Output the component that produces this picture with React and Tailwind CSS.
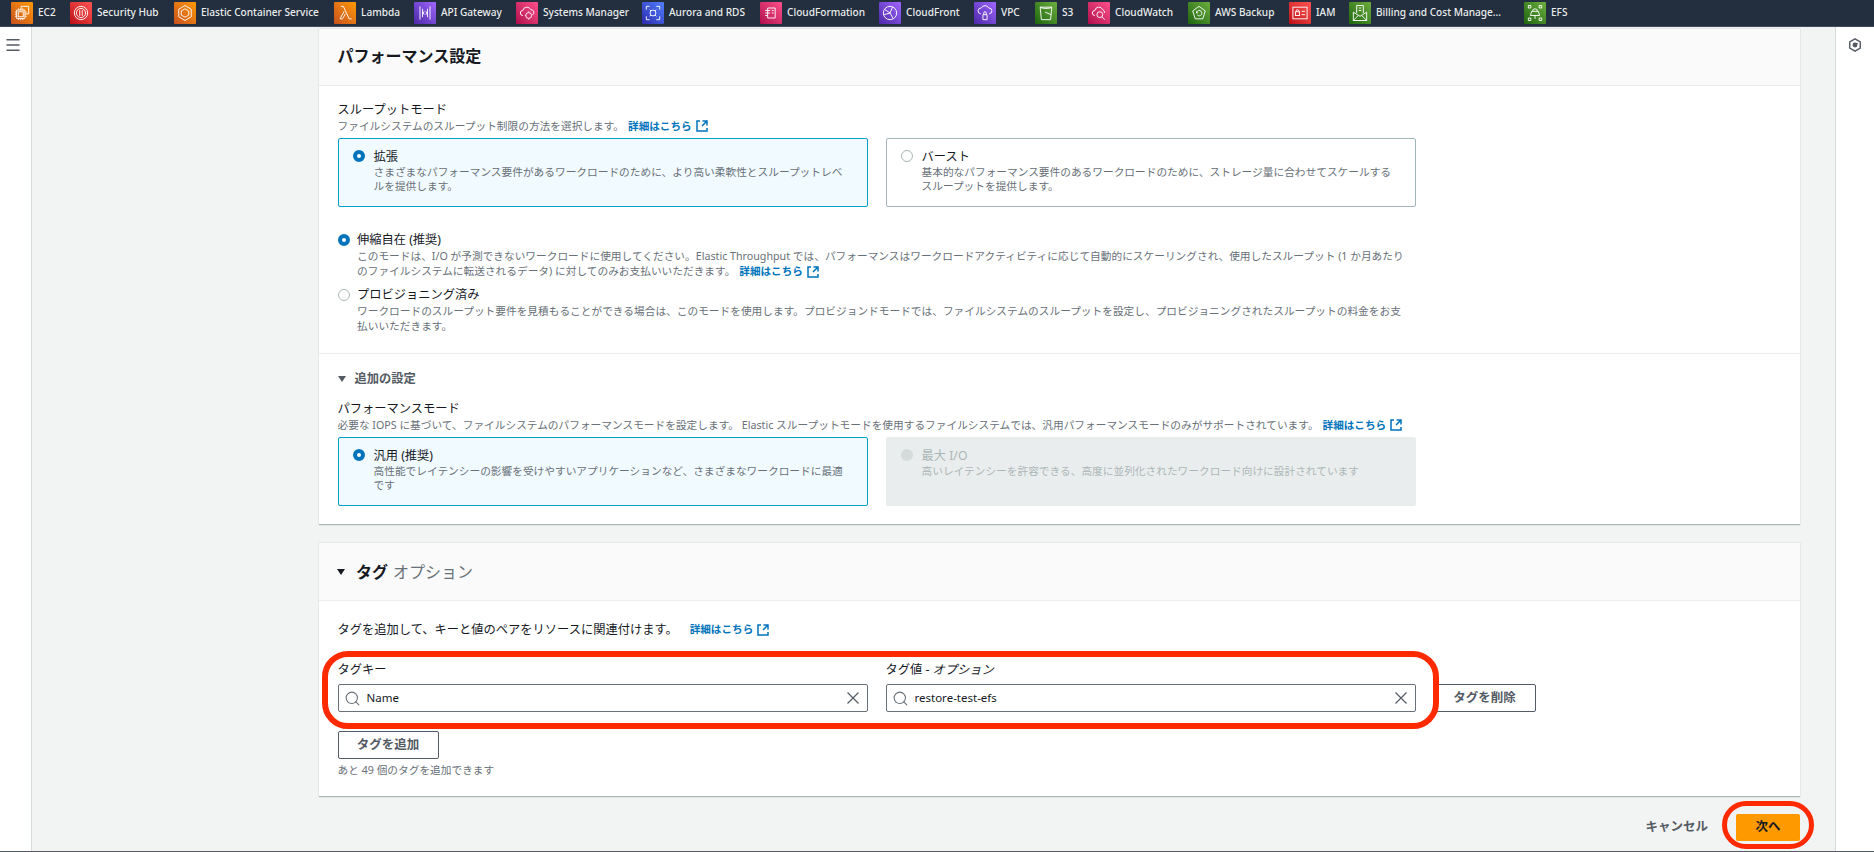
import React from 'react';
import { Search, Menu } from 'lucide-react';

const grads = {
  orange: 'from-[#c8511b] to-[#ff9900]',
  red: 'from-[#bd0816] to-[#ff5252]',
  purple: 'from-[#4d27a8] to-[#a166ff]',
  pink: 'from-[#b0084d] to-[#ff4f8b]',
  blue: 'from-[#2e27ad] to-[#527fff]',
  green: 'from-[#1b660f] to-[#6cae3e]',
};

const glyphs = {
  ec2: <><path d="M11 7V4h9v9h-3" /><rect x="7.500" y="10.500" width="6" height="6" /><path d="M5.500 8.500h10v10h-10zM8 6.500v2M10.500 6.500v2M13 6.500v2M8 18.500v2M10.500 18.500v2M13 18.500v2M3.500 11h2M3.500 13.500h2M3.500 16h2M15.500 11h2M15.500 13.500h2M15.500 16h2" /></>,
  hub: <><circle cx="12" cy="12" r="8" /><circle cx="12" cy="12" r="5.500" /><path d="M10.500 8.500v7M13.500 8.500v7" /></>,
  ecs: <><path d="M12 3l7.500 4.500v9L12 21l-7.500-4.500v-9z" /><path d="M12 7l4.500 2.500v5L12 17l-4.500-2.500v-5z" /></>,
  lambda: <path d="M7 4h3l7 15h3M11 10l-5 9h3l3.500-6" />,
  api: <><path d="M6 4v16M18 4v16M9 7v10M15 7v10" /><path d="M11 10l-1 2 1 2M13 10l1 2-1 2" /></>,
  ssm: <><path d="M7 15a3 3 0 0 1 0-6 5 5 0 0 1 9.500-1 3.500 3.500 0 0 1 2 6.500" /><circle cx="14" cy="15" r="3.500" /><path d="M14 10v1M14 19v1M9.500 15h1" /></>,
  aurora: <><circle cx="12" cy="12" r="3.500" /><path d="M4 8V4h4M16 4h4v4M4 16v4h4M20 16v4h-4M8 8l1.500 1.500M16 8l-1.500 1.500M8 16l1.500-1.500M16 16l-1.500-1.500" /></>,
  cfn: <><path d="M8 6h9v12H8zM5 9h6M5 12h6M5 15h3" /><path d="M13 9h2M13 12h2" /></>,
  cdn: <><circle cx="12" cy="12" r="8" /><path d="M6 8l6 4 3-7M12 12l4 7M12 12l-7 2" /></>,
  vpc: <><path d="M7 13a3.500 3.500 0 0 1 .5-7 5 5 0 0 1 9 0 3.500 3.500 0 0 1 .5 7" /><path d="M9.500 14h5v6h-5zM10.500 14v-2a1.500 1.500 0 0 1 3 0v2" /></>,
  s3: <><path d="M5 5h14l-1.500 15h-11z" /><path d="M5 5c2 2 12 2 14 0M11 11l7 3" /></>,
  watch: <><path d="M7 15a3 3 0 0 1 0-6 5 5 0 0 1 9.500-1 3.500 3.500 0 0 1 2 4" /><circle cx="13" cy="14" r="3.500" /><path d="M15.500 16.500L19 20" /></>,
  backup: <><path d="M12 4l7.500 5.500-3 9.500h-9l-3-9.500z" /><path d="M9 12a3.200 3.200 0 1 1 1 2.500M9 10v2h2" /></>,
  iam: <><rect x="3.500" y="5" width="17" height="14" /><rect x="6.500" y="10.500" width="5" height="4.500" /><path d="M7.500 10.500v-1a1.500 1.500 0 0 1 3 0v1M14 10h4M14 14h4" /></>,
  billing: <><path d="M4 11l8 5 8-5v10H4zM4 21l6-6M20 21l-6-6" /><path d="M8 12V3h8v9M10.500 6h3M10.500 9h3" /></>,
  efs: <><path d="M8 10h8l1.500 5h-11zM9 10a3 3 0 0 1 6 0M12 15v4" /><path d="M4 3h3v3H4zM17 3h3v3h-3zM4 18h3v3H4zM17 18h3v3h-3z" /></>,
};

const services = [
  { name: 'EC2', c: 'orange', g: 'ec2', w: 'w-[59px]' },
  { name: 'Security Hub', c: 'red', g: 'hub', w: 'w-[104px]' },
  { name: 'Elastic Container Service', c: 'orange', g: 'ecs', w: 'w-[160px]' },
  { name: 'Lambda', c: 'orange', g: 'lambda', w: 'w-[80px]' },
  { name: 'API Gateway', c: 'purple', g: 'api', w: 'w-[102px]' },
  { name: 'Systems Manager', c: 'pink', g: 'ssm', w: 'w-[126px]' },
  { name: 'Aurora and RDS', c: 'blue', g: 'aurora', w: 'w-[118px]' },
  { name: 'CloudFormation', c: 'pink', g: 'cfn', w: 'w-[119px]' },
  { name: 'CloudFront', c: 'purple', g: 'cdn', w: 'w-[95px]' },
  { name: 'VPC', c: 'purple', g: 'vpc', w: 'w-[61px]' },
  { name: 'S3', c: 'green', g: 's3', w: 'w-[53px]' },
  { name: 'CloudWatch', c: 'pink', g: 'watch', w: 'w-[100px]' },
  { name: 'AWS Backup', c: 'green', g: 'backup', w: 'w-[101px]' },
  { name: 'IAM', c: 'red', g: 'iam', w: 'w-[60px]' },
  { name: 'Billing and Cost Manage...', c: 'green', g: 'billing', w: 'w-[175px]' },
  { name: 'EFS', c: 'green', g: 'efs', w: 'w-[44px]' },
];

function ServiceIcon({ c, g }) {
  return (
    <span className={`flex w-[22px] h-[22px] shrink-0 items-center justify-center rounded-[1px] bg-gradient-to-tr ${grads[c]}`}>
      <svg viewBox="0 0 24 24" className="w-[20px] h-[20px]" fill="none" stroke="#fff" strokeWidth="1.1">
        {glyphs[g]}
      </svg>
    </span>
  );
}

function Link({ wide }) {
  return (
    <a className={`inline-flex items-center gap-[4px] font-bold text-[10.6px] text-[#0073bb] ${wide ? 'ml-[12px]' : 'ml-[4px]'}`}>
      詳細はこちら
      <svg viewBox="0 0 12 12" className="w-[12px] h-[12px]" fill="none" stroke="#0073bb" strokeWidth="1.500">
        <path d="M4 1H1v10h10V8M6.500 1H11v4.500M11 1L6 6" />
      </svg>
    </a>
  );
}

function Radio({ on, disabled }) {
  if (disabled) return <span className="block w-[12px] h-[12px] rounded-full bg-[#d5dbdb]" />;
  if (on) return <span className="block w-[12px] h-[12px] rounded-full border-[4px] border-[#0073bb] bg-white" />;
  return <span className="block w-[12px] h-[12px] rounded-full border border-[#aab7b8] bg-white" />;
}

function Card({ title, children, on, disabled }) {
  const look = on
    ? 'border-[#00a1c9] bg-[#f1faff]'
    : disabled
      ? 'border-[#eaeded] bg-[#eaeded]'
      : 'border-[#a3b5bb] bg-white';
  return (
    <div className={`flex h-[69px] rounded-[2px] border pl-[14px] pr-[13px] pt-[10px] ${look}`}>
      <div className="w-[21px] pt-[1px] shrink-0"><Radio on={on} disabled={disabled} /></div>
      <div>
        <div className={`text-[12.250px] leading-[15px] ${disabled ? 'text-[#aab7b8]' : 'text-[#16191f]'}`}>{title}</div>
        <div className={`mt-[1px] text-[10.700px] leading-[14px] ${disabled ? 'text-[#aab7b8]' : 'text-[#687078]'}`}>{children}</div>
      </div>
    </div>
  );
}

function OptionRow({ on, title, children }) {
  return (
    <div className="flex">
      <div className="w-[19.500px] pt-[3px] shrink-0"><Radio on={on} /></div>
      <div className="w-[1080px]">
        <div className="text-[12.250px] leading-[18px] text-[#16191f]">{title}</div>
        <div className="text-[10.700px] leading-[15px] text-[#687078]">{children}</div>
      </div>
    </div>
  );
}

function TagInput({ value }) {
  return (
    <div className="flex items-center h-[28px] rounded-[2px] border border-[#687078] bg-white pl-[5px] pr-[8px]">
      <Search className="w-[17px] h-[17px] text-[#687078] shrink-0" strokeWidth={1.5} />
      <span className="ml-[6px] flex-1 text-[11.500px] text-[#16191f]">{value}</span>
      <svg viewBox="0 0 12 12" className="w-[12px] h-[12px] shrink-0" fill="none" stroke="#545b64" strokeWidth="1.200">
        <path d="M.5 .5l11 11M11.500 .5l-11 11" />
      </svg>
    </div>
  );
}

function Triangle({ dark }) {
  return <span className={`block w-0 h-0 border-x-[4px] border-x-transparent border-t-[6px] ${dark ? 'border-t-[#16191f]' : 'border-t-[#545b64]'}`} />;
}

export default function App() {
  return (
    <div className="flex flex-col h-screen w-full overflow-hidden bg-[#f2f3f3] font-['Noto_Sans','Noto_Sans_CJK_JP',sans-serif]">
      <div className="flex items-center h-[27px] shrink-0 pl-[11px] bg-[#232f3e] border-b border-[#414d5c]">
        {services.map((s) => (
          <div key={s.name} className={`flex items-center gap-[5px] shrink-0 ${s.w}`}>
            <ServiceIcon c={s.c} g={s.g} />
            <span className="text-[10.100px] font-medium text-[#eaeded] whitespace-nowrap">{s.name}</span>
          </div>
        ))}
      </div>

      <div className="flex flex-1 min-h-0 border-b border-[#545b64]">
        <div className="w-[32px] shrink-0 bg-white border-r border-[#d5dbdb] pt-[9px] pl-[4px]">
          <Menu className="w-[18px] h-[18px] text-[#545b64]" strokeWidth={2} />
        </div>

        <div className="flex-1 min-w-0 pl-[287px] pr-[35px] pt-[2px]">
          <section className="bg-white border-b border-[#aab7b8] shadow-[0_0_1px_rgba(0,28,36,0.3)] h-[496px]">
            <div className="flex items-center h-[57px] pl-[18.500px] pb-[3px] bg-[#fafafa] border-b border-[#eaeded]">
              <h2 className="text-[16px] font-bold text-[#16191f]">パフォーマンス設定</h2>
            </div>

            <div className="pl-[18.500px] pt-[16px]">
              <div className="text-[12.250px] leading-[16px] text-[#16191f]">スループットモード</div>
              <div className="flex items-center h-[17px] text-[10.700px] text-[#687078]">
                ファイルシステムのスループット制限の方法を選択します。<Link />
              </div>
              <div className="grid grid-cols-[530px_530px] gap-[18px] mt-[3px]">
                <Card on title="拡張">さまざまなパフォーマンス要件があるワークロードのために、より高い柔軟性とスループットレベ<br />ルを提供します。</Card>
                <Card title="バースト">基本的なパフォーマンス要件のあるワークロードのために、ストレージ量に合わせてスケールする<br />スループットを提供します。</Card>
              </div>

              <div className="flex flex-col gap-[7px] mt-[24px]">
                <OptionRow on title="伸縮自在 (推奨)">
                  このモードは、I/O が予測できないワークロードに使用してください。Elastic Throughput では、パフォーマンスはワークロードアクティビティに応じて自動的にスケーリングされ、使用したスループット (1 か月あたり<br />のファイルシステムに転送されるデータ) に対してのみお支払いいただきます。<Link />
                </OptionRow>
                <OptionRow title="プロビジョニング済み">
                  ワークロードのスループット要件を見積もることができる場合は、このモードを使用します。プロビジョンドモードでは、ファイルシステムのスループットを設定し、プロビジョニングされたスループットの料金をお支<br />払いいただきます。
                </OptionRow>
              </div>
            </div>

            <div className="mt-[19px] border-t border-[#eaeded] pl-[18.500px] pt-[16px]">
              <div className="flex items-center gap-[9px] h-[18px]">
                <Triangle />
                <span className="text-[12.250px] font-bold text-[#545b64]">追加の設定</span>
              </div>
              <div className="mt-[13px] text-[12.250px] leading-[16px] text-[#16191f]">パフォーマンスモード</div>
              <div className="flex items-center h-[17px] text-[10.700px] text-[#687078]">
                必要な IOPS に基づいて、ファイルシステムのパフォーマンスモードを設定します。 Elastic スループットモードを使用するファイルシステムでは、汎用パフォーマンスモードのみがサポートされています。<Link />
              </div>
              <div className="grid grid-cols-[530px_530px] gap-[18px] mt-[3px]">
                <Card on title="汎用 (推奨)">高性能でレイテンシーの影響を受けやすいアプリケーションなど、さまざまなワークロードに最適<br />です</Card>
                <Card disabled title="最大 I/O">高いレイテンシーを許容できる、高度に並列化されたワークロード向けに設計されています</Card>
              </div>
            </div>
          </section>

          <section className="mt-[18px] bg-white border-b border-[#aab7b8] shadow-[0_0_1px_rgba(0,28,36,0.3)] h-[254px]">
            <div className="flex items-center h-[58px] pl-[18px] bg-[#fafafa] border-b border-[#eaeded]">
              <Triangle dark />
              <h2 className="ml-[11px] text-[16px] font-bold text-[#16191f]">タグ</h2>
              <span className="ml-[5px] text-[16px] text-[#687078]">オプション</span>
            </div>

            <div className="pl-[18.500px] pt-[20px]">
              <div className="flex items-center h-[18px] text-[12.250px] text-[#16191f]">
                タグを追加して、キーと値のペアをリソースに関連付けます。<Link wide />
              </div>

              <div className="relative mt-[22px] grid grid-cols-[530px_530px_102px] gap-x-[18px] h-[51px]">
                <div>
                  <div className="pt-[1px] text-[12.250px] leading-[16px] mb-[6px] text-[#16191f]">タグキー</div>
                  <TagInput value="Name" />
                </div>
                <div>
                  <div className="pt-[1px] text-[12.250px] leading-[16px] mb-[6px] text-[#16191f]">タグ値 - <span className="italic">オプション</span></div>
                  <TagInput value="restore-test-efs" />
                </div>
                <div className="pt-[23px]">
                  <button className="block w-[102px] h-[28px] rounded-[2px] border border-[#545b64] bg-white text-[12.500px] font-bold text-[#545b64]">タグを削除</button>
                </div>
                <div className="absolute left-[-16px] top-[-10px] w-[1117px] h-[78px] rounded-[26px] border-[6px] border-[#ff2a00]" />
              </div>

              <button className="block mt-[19px] w-[101px] h-[28px] rounded-[2px] border border-[#545b64] bg-white text-[12.500px] font-bold text-[#545b64]">タグを追加</button>
              <div className="mt-[3px] text-[10.700px] leading-[16px] text-[#687078]">あと 49 個のタグを追加できます</div>
            </div>
          </section>

          <div className="flex items-center justify-end gap-[28px] mt-[17px]">
            <span className="text-[12.500px] font-bold text-[#545b64]">キャンセル</span>
            <div className="relative">
              <button className="block w-[64px] h-[27px] rounded-[2px] bg-[#ff9900] text-[12.500px] font-bold text-[#16191f]">次へ</button>
              <div className="absolute left-[-14px] top-[-13px] w-[92px] h-[48px] rounded-[24px] border-[5px] border-[#ff2a00]" />
            </div>
          </div>
        </div>

        <div className="w-[39px] shrink-0 bg-white border-l border-[#d5dbdb] flex justify-center pt-[11px] pr-[2px]">
          <svg viewBox="0 0 16 16" className="w-[14px] h-[14px] mr-[-1px]" fill="none" stroke="#545b64" strokeWidth="1.600">
            <path d="M8 1l6 3.500v7L8 15l-6-3.500v-7z" />
            <circle cx="8" cy="8" r="2" fill="#545b64" />
            <path d="M8 8l3-2" />
          </svg>
        </div>
      </div>
    </div>
  );
}
